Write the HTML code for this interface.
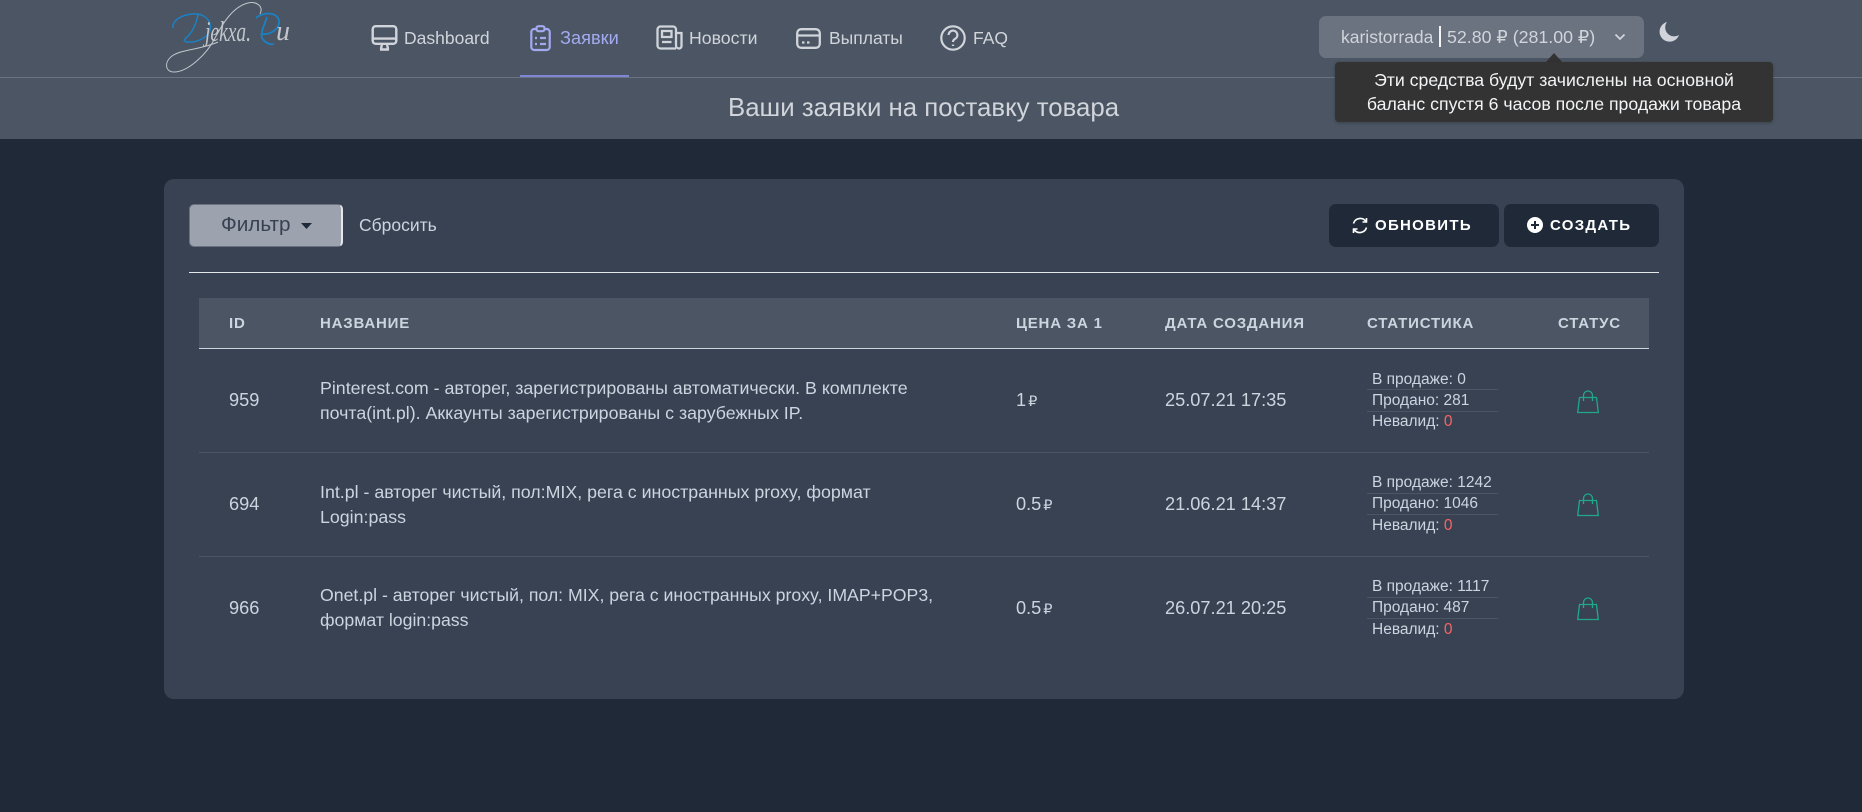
<!DOCTYPE html>
<html lang="ru"><head><meta charset="utf-8"><title>Заявки</title>
<style>
*{box-sizing:border-box}
html,body{margin:0;padding:0;width:1862px;height:812px;overflow:hidden;background:#1f2937;font-family:"Liberation Sans","DejaVu Sans",sans-serif;color:#cbd5e0}
.a{position:absolute;white-space:nowrap}
svg{position:absolute;overflow:visible}
.n{font-size:17.5px;line-height:24px;top:26px;color:#d1d5db}
.th{top:315px;font-size:15px;line-height:18px;font-weight:700;letter-spacing:.8px;color:#cbd5e0}
.v{font-size:18.2px;line-height:24px;color:#cbd5e0}
.d{font-size:17.8px;line-height:25px;color:#cbd5e0}
.s{font-size:15.5px;line-height:18px;color:#cbd5e0}
.sep{position:absolute;left:1367px;width:131px;height:1px;background:#4b5563}
.rs{position:absolute;left:199px;width:1450px;height:1px;background:#4b5563}
.r{color:#f56565}
.rub{font-size:14.5px;margin-left:2px}
.btn{position:absolute;top:204px;height:43px;background:#1f2937;border-radius:7px;color:#fff;font-size:15px;font-weight:700;letter-spacing:1.3px;line-height:43px}
</style></head><body>
<div class="a" style="left:0;top:0;width:1862px;height:139px;background:#4b5563"></div>
<div class="a" style="left:0;top:77px;width:1862px;height:1px;background:#6b7280"></div>

<!-- logo -->
<svg style="left:160px;top:0" width="140" height="78" viewBox="0 0 140 78" fill="none">
<path d="M13 28C12 20 22 15 32 14C44 13 52 20 50 30C48 38 36 43 27 42C23 41 24 40 26 38C32 33 36 24 38 15" stroke="#1a82c4" stroke-width="1.5"/>
<path d="M100 14C104 6 96 1 88 3C72 7 62 25 55 38C47 54 28 72 14 72C5 72 4 62 12 56C22 49 40 50 58 42" stroke="#c2c6cc" stroke-width="1"/>
<path d="M96 18C104 11 120 12 119 23C118 31 108 35 102 34M107 17C104 26 100 34 102 38C105 43 110 45 114 44" stroke="#1a82c4" stroke-width="1.8"/>
<text x="45" y="41" font-family="Liberation Serif,serif" font-style="italic" font-size="28" fill="#c2c6cc" textLength="46" lengthAdjust="spacingAndGlyphs">jekxa.</text>
<text x="116" y="40" font-family="Liberation Serif,serif" font-style="italic" font-size="28" fill="#c2c6cc">u</text>
</svg>

<!-- nav -->
<svg style="left:371px;top:25px" width="27" height="26" viewBox="0 0 27 26" fill="none" stroke="#d1d5db" stroke-width="2.4"><rect x="1.7" y="1.2" width="23.6" height="17.6" rx="3"/><path d="M2 13.6H25M9 24.5H18M11 19L10 24M16 19L17 24"/></svg>
<div class="a n" style="left:404px">Dashboard</div>

<svg style="left:530px;top:25px" width="21" height="26" viewBox="0 0 21 26" fill="none" stroke="#a3aaf0" stroke-width="2.2"><rect x="1.3" y="4" width="18.4" height="21" rx="3"/><rect x="6.5" y="1.2" width="8" height="5" rx="2" fill="#4b5563"/><path d="M5 13H7M10 13H16M5 19H7M10 19H16"/></svg>
<div class="a n" style="left:560px;color:#a3aaf0;font-size:18.2px">Заявки</div>
<div class="a" style="left:520px;top:75px;width:109px;height:2px;background:#7f86d6"></div>

<svg style="left:656px;top:25px" width="27" height="25" viewBox="0 0 27 25" fill="none" stroke="#d1d5db" stroke-width="2.3"><path d="M20 23.5H4.5A3 3 0 0 1 1.5 20.5V4.5A3 3 0 0 1 4.5 1.5H17A3 3 0 0 1 20 4.5V20.5A3 3 0 0 0 23 23.5A2.5 2.5 0 0 0 25.5 21V8H20"/><rect x="6" y="6" width="9.5" height="6" /><path d="M6 17H15.5"/></svg>
<div class="a n" style="left:689px;font-size:17.7px">Новости</div>

<svg style="left:796px;top:28px" width="25" height="21" viewBox="0 0 25 21" fill="none" stroke="#d1d5db" stroke-width="2.3"><rect x="1.2" y="1.2" width="22.6" height="18.6" rx="4"/><path d="M1.5 7.5H23.5M6 14.5H8.5M11 14.5H13.5"/></svg>
<div class="a n" style="left:829px">Выплаты</div>

<svg style="left:940px;top:25px" width="26" height="26" viewBox="0 0 26 26" fill="none" stroke="#d1d5db" stroke-width="2.2"><circle cx="13" cy="13" r="11.7"/><path d="M8.6 10A4.4 4.4 0 1 1 14.8 14C13.5 14.8 13 15.5 13 17"/><path d="M13 19.6V21"/></svg>
<div class="a n" style="left:973px">FAQ</div>

<div class="a" style="left:728px;top:93px;font-size:25.8px;line-height:30px;color:#d1d5db">Ваши заявки на поставку товара</div>

<!-- balance -->
<div class="a" style="left:1319px;top:16px;width:325px;height:42px;background:#6b7280;border-radius:7px"></div>
<div class="a" style="left:1341px;top:25px;font-size:17.5px;line-height:24px;color:#d1d5db">karistorrada</div>
<div class="a" style="left:1439px;top:26px;width:1.5px;height:21px;background:#f3f4f6"></div>
<div class="a" style="left:1447px;top:25px;font-size:17.8px;line-height:24px;color:#d1d5db">52.80 ₽ (281.00 ₽)</div>
<svg style="left:1614px;top:33px" width="12" height="8" viewBox="0 0 12 8" fill="none" stroke="#d1d5db" stroke-width="1.8"><path d="M1.5 1.5L6 6L10.5 1.5"/></svg>
<svg style="left:1659px;top:21px" width="21" height="21" viewBox="0 0 21 21"><path d="M8 1A10 10 0 1 0 20 14A9 9 0 0 1 8 1Z" fill="#d1d5db"/></svg>

<!-- tooltip -->
<svg style="left:1545px;top:53px" width="18" height="10" viewBox="0 0 18 10"><path d="M0 10L9 0L18 10Z" fill="#333"/></svg>
<div class="a" style="left:1335px;top:62px;width:438px;height:60px;background:#333;border-radius:4px;box-shadow:0 1px 3px rgba(0,0,0,.25);color:#f3f4f6;font-size:17.7px;line-height:24px;text-align:center;padding-top:6px">Эти средства будут зачислены на основной<br>баланс спустя 6 часов после продажи товара</div>

<!-- card -->
<div class="a" style="left:164px;top:179px;width:1520px;height:520px;background:#394252;border-radius:10px"></div>
<div class="a" style="left:189px;top:204px;width:154px;height:43px;background:#9ca3af;border:1px solid #6b7280;border-right:2px solid #e5e7eb;border-radius:5px"></div>
<div class="a" style="left:221px;top:213px;font-size:20.7px;line-height:24px;color:#374151">Фильтр</div>
<svg style="left:301px;top:223px" width="11" height="6" viewBox="0 0 11 6"><path d="M0 0H11L5.5 6Z" fill="#1f2937"/></svg>
<div class="a" style="left:359px;top:213px;font-size:17.5px;line-height:24px;color:#cbd5e0">Сбросить</div>

<div class="btn" style="left:1329px;width:170px;padding-left:46px">ОБНОВИТЬ</div>
<svg style="left:1352px;top:217px" width="16" height="17" viewBox="0 0 16 17" fill="none" stroke="#fff" stroke-width="1.6"><path d="M1.5 6.5A7 7 0 0 1 14 4.5M14.5 1V5H10.5M14.5 10.5A7 7 0 0 1 2 12.5M1.5 16V12H5.5"/></svg>
<div class="btn" style="left:1504px;width:155px;padding-left:46px">СОЗДАТЬ</div>
<svg style="left:1527px;top:217px" width="16" height="16" viewBox="0 0 16 16"><circle cx="8" cy="8" r="8" fill="#fff"/><path d="M8 4V12M4 8H12" stroke="#1f2937" stroke-width="2"/></svg>

<div class="a" style="left:189px;top:272px;width:1470px;height:1px;background:#e5e7eb"></div>

<!-- table head -->
<div class="a" style="left:199px;top:298px;width:1450px;height:51px;background:#4b5563;border-bottom:1px solid #cbd5e0"></div>
<div class="a th" style="left:229px">ID</div>
<div class="a th" style="left:320px">НАЗВАНИЕ</div>
<div class="a th" style="left:1016px">ЦЕНА ЗА 1</div>
<div class="a th" style="left:1165px">ДАТА СОЗДАНИЯ</div>
<div class="a th" style="left:1367px">СТАТИСТИКА</div>
<div class="a th" style="left:1558px">СТАТУС</div>

<!-- row 1 -->
<div class="a v" style="left:229px;top:388px">959</div>
<div class="a d" style="left:320px;top:376px">Pinterest.com - авторег, зарегистрированы автоматически. В комплекте<br>почта(int.pl). Аккаунты зарегистрированы с зарубежных IP.</div>
<div class="a v" style="left:1016px;top:388px">1<span class="rub">₽</span></div>
<div class="a v" style="left:1165px;top:388px">25.07.21 17:35</div>
<div class="a s" style="left:1372px;top:371px">В продаже: 0</div><div class="sep" style="top:389px"></div>
<div class="a s" style="left:1372px;top:392px">Продано: 281</div><div class="sep" style="top:411px"></div>
<div class="a s" style="left:1372px;top:413px">Невалид: <span class="r">0</span></div>
<svg style="left:1577px;top:389px" width="22" height="25" viewBox="0 0 22 25" fill="none" stroke="#1fa98a" stroke-width="1.3"><path d="M2.5 8.5H19.5L21.3 23.5H.7ZM6.5 12V6.5A4.5 4.5 0 0 1 15.5 6.5V12"/></svg>
<div class="rs" style="top:452px"></div>

<!-- row 2 -->
<div class="a v" style="left:229px;top:492px">694</div>
<div class="a d" style="left:320px;top:480px">Int.pl - авторег чистый, пол:MIX, рега с иностранных proxy, формат<br>Login:pass</div>
<div class="a v" style="left:1016px;top:492px">0.5<span class="rub">₽</span></div>
<div class="a v" style="left:1165px;top:492px">21.06.21 14:37</div>
<div class="a s" style="left:1372px;top:474px">В продаже: 1242</div><div class="sep" style="top:493px"></div>
<div class="a s" style="left:1372px;top:495px">Продано: 1046</div><div class="sep" style="top:514px"></div>
<div class="a s" style="left:1372px;top:517px">Невалид: <span class="r">0</span></div>
<svg style="left:1577px;top:492px" width="22" height="25" viewBox="0 0 22 25" fill="none" stroke="#1fa98a" stroke-width="1.3"><path d="M2.5 8.5H19.5L21.3 23.5H.7ZM6.5 12V6.5A4.5 4.5 0 0 1 15.5 6.5V12"/></svg>
<div class="rs" style="top:556px"></div>

<!-- row 3 -->
<div class="a v" style="left:229px;top:596px">966</div>
<div class="a d" style="left:320px;top:583px;font-size:17.7px">Onet.pl - авторег чистый, пол: MIX, рега с иностранных proxy, IMAP+POP3,<br>формат login:pass</div>
<div class="a v" style="left:1016px;top:596px">0.5<span class="rub">₽</span></div>
<div class="a v" style="left:1165px;top:596px">26.07.21 20:25</div>
<div class="a s" style="left:1372px;top:578px">В продаже: 1117</div><div class="sep" style="top:597px"></div>
<div class="a s" style="left:1372px;top:599px">Продано: 487</div><div class="sep" style="top:618px"></div>
<div class="a s" style="left:1372px;top:621px">Невалид: <span class="r">0</span></div>
<svg style="left:1577px;top:596px" width="22" height="25" viewBox="0 0 22 25" fill="none" stroke="#1fa98a" stroke-width="1.3"><path d="M2.5 8.5H19.5L21.3 23.5H.7ZM6.5 12V6.5A4.5 4.5 0 0 1 15.5 6.5V12"/></svg>
</body></html>
